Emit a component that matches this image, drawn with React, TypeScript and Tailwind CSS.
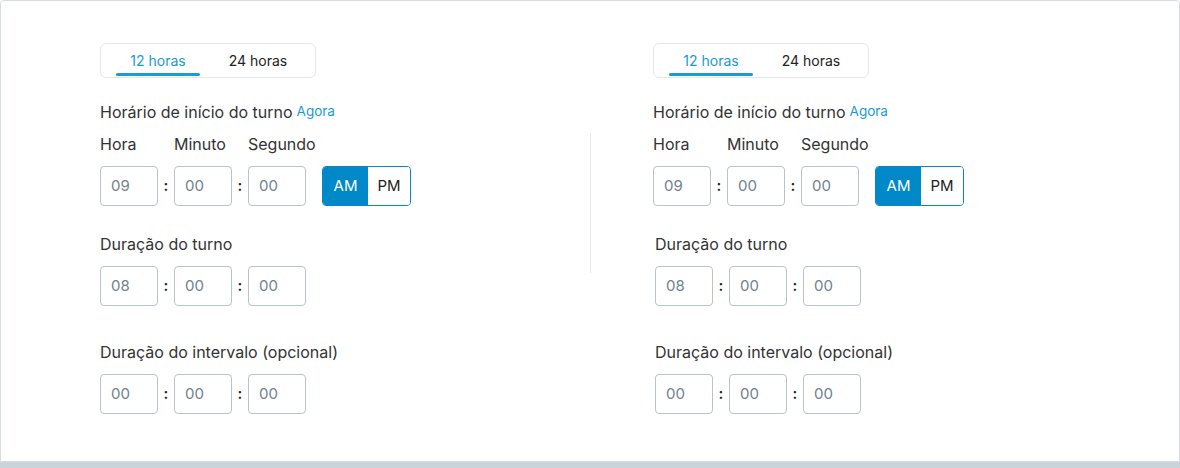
import React from "react";

const font = { fontFamily: "Inter, 'Noto Sans', sans-serif" };

function Tabs() {
  return (
    <div className="flex w-[216px] h-[35px] border border-[#e3e7ea] rounded-[6px] px-[15px] gap-[16px]">
      <div className="relative w-[84px] flex items-center justify-center text-[14px] text-[#1a9ad6]">
        12 horas
        <div className="absolute left-0 right-0 bottom-[1px] h-[3px] rounded-full bg-[#1a9ad6]" />
      </div>
      <div className="w-[84px] flex items-center justify-center text-[14px] text-[#222]">
        24 horas
      </div>
    </div>
  );
}

function Box({ v }: { v: string }) {
  return (
    <div className="w-[58px] h-[40px] border border-[#b9c3ca] rounded-[4px] flex items-center pl-[10px] text-[15px] text-[#6f828e]">
      {v}
    </div>
  );
}

function Colon() {
  return <div className="w-[16px] text-center text-[15px] text-[#222] font-semibold">:</div>;
}

function Triple({ a, b, c }: { a: string; b: string; c: string }) {
  return (
    <div className="flex items-center">
      <Box v={a} />
      <Colon />
      <Box v={b} />
      <Colon />
      <Box v={c} />
    </div>
  );
}

function Column({ shift }: { shift: boolean }) {
  const sh = shift ? "ml-[2px]" : "";
  return (
    <div className="flex flex-col">
      <Tabs />
      <div className="mt-[23px] h-[21px] flex items-center text-[16px] text-[#333]">
        Horário de início do turno
        <span className="ml-[4px] text-[13.5px] text-[#1a9ad6]">Agora</span>
      </div>
      <div className="mt-[11px] h-[21px] flex items-center text-[16px] text-[#333]">
        <div className="w-[74px]">Hora</div>
        <div className="w-[74px]">Minuto</div>
        <div className="w-[74px]">Segundo</div>
      </div>
      <div className="mt-[12px] flex items-center">
        <Triple a="09" b="00" c="00" />
        <div className="ml-[16px] flex h-[40px] w-[89px] border border-[#0a86c2] rounded-[4px] overflow-hidden text-[15px]">
          <div className="w-[45px] bg-[#0088c8] text-white flex items-center justify-center">AM</div>
          <div className="flex-1 bg-white text-[#222] flex items-center justify-center">PM</div>
        </div>
      </div>
      <div className={`mt-[27px] h-[21px] flex items-center text-[16px] text-[#333] ${sh}`}>
        Duração do turno
      </div>
      <div className={`mt-[12px] ${sh}`}>
        <Triple a="08" b="00" c="00" />
      </div>
      <div className={`mt-[35px] h-[21px] flex items-center text-[16px] text-[#333] ${sh}`}>
        Duração do intervalo (opcional)
      </div>
      <div className={`mt-[12px] ${sh}`}>
        <Triple a="00" b="00" c="00" />
      </div>
    </div>
  );
}

export default function App() {
  return (
    <div className="w-[1180px] h-[468px] bg-white flex flex-col" style={font}>
      <div className="h-[462px] border border-[#d6dce0] rounded-t-[4px] flex pt-[42px] pl-[99px]">
        <div className="w-[490px]">
          <Column shift={false} />
        </div>
        <div className="w-px h-[140px] mt-[90px] bg-[#e5e8eb]" />
        <div className="ml-[62px]">
          <Column shift={true} />
        </div>
      </div>
      <div className="h-[6px] bg-[#c8d3da]" />
    </div>
  );
}
